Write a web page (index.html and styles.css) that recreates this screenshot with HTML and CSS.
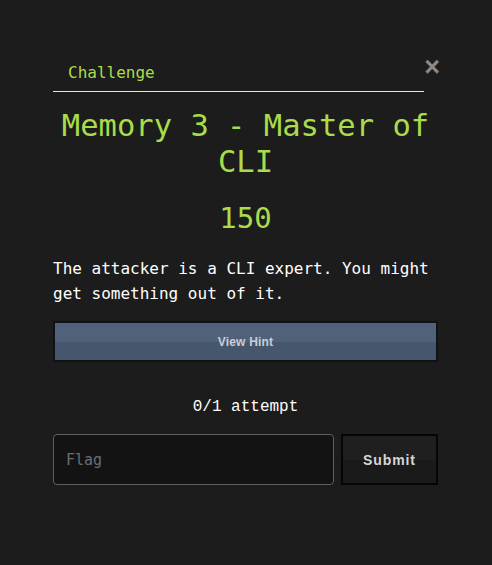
FILE: index.html
```html
<!DOCTYPE html>
<html>
<head>
<meta charset="utf-8">
<link rel="stylesheet" href="styles.css">
</head>
<body>
<div class="modal">
  <div class="head">
    <div class="tabs"><span class="tab">Challenge</span></div>
    <button class="close" aria-label="Close">×</button>
  </div>
  <h1 class="title">Memory 3 - Master of CLI</h1>
  <div class="points">150</div>
  <p class="desc">The attacker is a CLI expert. You might get something out of it.</p>
  <button class="hint">View Hint</button>
  <div class="attempts">0/1 attempt</div>
  <div class="submit-row">
    <input class="flag" type="text" placeholder="Flag">
    <button class="submit">Submit</button>
  </div>
</div>
</body>
</html>
```

FILE: styles.css
```css
html, body {
  margin: 0;
  padding: 0;
  background: #1c1c1c;
}
body {
  width: 492px;
  height: 565px;
  font-family: "DejaVu Sans Mono", monospace;
  color: #ffffff;
}
.modal {
  padding: 55px 54px 0 53px;
  display: flex;
  flex-direction: column;
}
.head {
  display: flex;
  align-items: flex-start;
  justify-content: space-between;
}
.tabs {
  width: 371px;
  border-bottom: 1px solid #e6e6e6;
  height: 37px;
  box-sizing: border-box;
}
.tab {
  display: inline-block;
  margin-left: 15px;
  margin-top: 9px;
  font-size: 16px;
  line-height: 18px;
  color: #a9dc4a;
}
.close {
  background: none;
  border: none;
  padding: 0;
  margin-top: 0;
  margin-right: -2px;
  font-family: "Liberation Sans", Arial, sans-serif;
  font-weight: bold;
  font-size: 27px;
  line-height: 24px;
  color: #8a8a8a;
}
.title {
  margin: 16px 0 0 0;
  text-align: center;
  font-weight: normal;
  font-size: 30.5px;
  line-height: 36px;
  color: #a9dc4a;
}
.points {
  margin-top: 20px;
  text-align: center;
  font-size: 29px;
  line-height: 36px;
  color: #a9dc4a;
}
.desc {
  margin: 20px 0 0 0;
  font-size: 16px;
  line-height: 25px;
  color: #ffffff;
}
.hint {
  margin-top: 15px;
  height: 41px;
  border: 2px solid #0e131a;
  background: linear-gradient(#506179 0%, #506179 50%, #46566d 50%, #46566d 100%);
  color: #c9ced6;
  font-family: "Liberation Sans", Arial, sans-serif;
  font-weight: bold;
  font-size: 12px;
  letter-spacing: 0.2px;
  padding: 0;
}
.attempts {
  margin-top: 34px;
  text-align: center;
  font-family: "Liberation Mono", monospace;
  font-size: 16px;
  line-height: 22px;
  color: #ffffff;
}
.submit-row {
  margin-top: 16px;
  display: flex;
  gap: 7px;
}
.flag {
  flex: 1;
  height: 51px;
  box-sizing: border-box;
  background: #131313;
  border: 1px solid #5e5e5e;
  border-radius: 4px;
  padding: 0 12px;
  font-family: "DejaVu Sans Mono", monospace;
  font-size: 15px;
  color: #fff;
  outline: none;
}
.flag::placeholder {
  color: #6a6e72;
}
.submit {
  width: 97px;
  height: 51px;
  border: 2px solid #050505;
  background: linear-gradient(#1f1f1f 0%, #1f1f1f 50%, #1a1a1a 50%, #1a1a1a 100%);
  color: #d6d6d6;
  font-family: "Liberation Sans", Arial, sans-serif;
  font-weight: bold;
  font-size: 14px;
  letter-spacing: 0.9px;
  padding: 0;
}
```
